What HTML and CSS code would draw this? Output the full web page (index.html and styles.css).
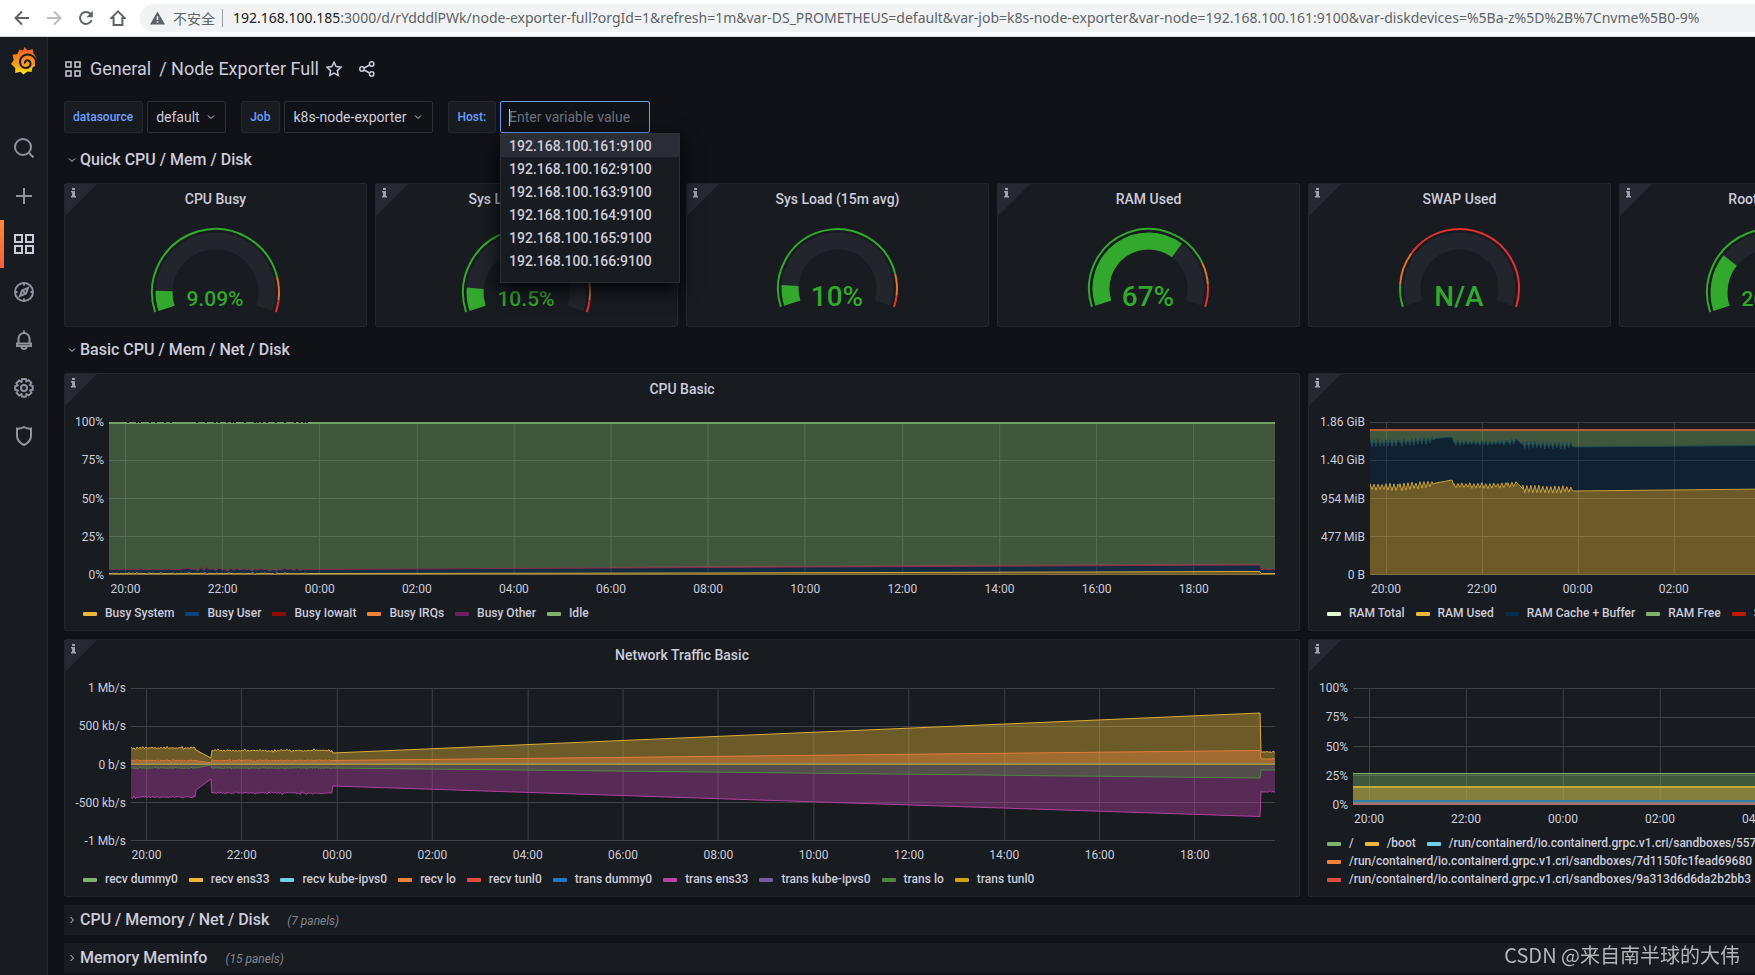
FILE: index.html
```html
<!DOCTYPE html>
<html lang="en">
<head>
    <meta charset="utf-8">
    <title>Node Exporter Full - Grafana</title>
    <link rel="stylesheet" href="styles.css">
</head>
<body>
    <header class="browser-bar">
        <button class="browser-btn" aria-label="Back"><svg viewBox="0 0 16 16"><path d="M15 8H2M8 1.5L1.5 8L8 14.5"/></svg></button>
        <button class="browser-btn" aria-label="Forward" disabled><svg viewBox="0 0 16 16"><path d="M1 8h13M8 1.5L14.500 8L8 14.500"/></svg></button>
        <button class="browser-btn" aria-label="Reload"><svg viewBox="0 0 16 16"><path d="M13.600 10.200A6 6 0 1 1 12.600 4"/><path class="solid" d="M14.800 0.800v6.400H8.400z"/></svg></button>
        <button class="browser-btn" aria-label="Home"><svg viewBox="0 0 16 16"><path d="M8 1.400L1.300 8H3.600V15H12.400V8H14.700z"/></svg></button>
        <div class="address" role="textbox" aria-label="Address">
            <svg class="warn" viewBox="0 0 16 14"><path fill-rule="evenodd" d="M8 0L16 14H0zM7.200 5v4h1.600V5zM7.200 10.500v1.600h1.600v-1.600z"/></svg>
            <span class="insecure">不安全</span>
            <span class="url"><b>192.168.100.185</b>:3000/d/rYdddlPWk/node-exporter-full?orgId=1&amp;refresh=1m&amp;var-DS_PROMETHEUS=default&amp;var-job=k8s-node-exporter&amp;var-node=192.168.100.161:9100&amp;var-diskdevices=%5Ba-z%5D%2B%7Cnvme%5B0-9%</span>
        </div>
    </header>

    <div class="app">
        <nav class="sidebar">
            <a href="#" class="logo" aria-label="Grafana">
                <svg viewBox="0 0 26 28">
                    <defs>
                        <linearGradient id="logoFill" x1="0" y1="1" x2="0" y2="0">
                            <stop offset="0" stop-color="#fcee1f"/>
                            <stop offset="0.3" stop-color="#faa61a"/>
                            <stop offset="1" stop-color="#f05a28"/>
                        </linearGradient>
                    </defs>
                    <path fill="url(#logoFill)" d="M13.500 0L16.500 3.200L21.800 2.300L22.300 6.500C24.500 8.500 25.500 11 25.500 13.500L23.800 14.500L24 19L21.500 20.500L20.500 25L16.500 24.500L12.500 27.500L9.500 24.800L4.300 26L4.200 21L0 17L2.800 13L1.500 7.800L6.300 7L8.500 2.600L12 3.600z"/>
                    <path class="swirl" d="M26 16.500C24.500 9.500 20 7.200 16 7.400C11.500 7.800 8.800 11.500 9 15.200C9.300 19 12 21.200 15 21C18 20.600 19.800 18.600 19.500 16.200C19.200 14 17.400 13 15.600 13.400C14.200 13.800 13.600 15.400 14.400 16.400"/>
                </svg>
            </a>
            <a href="#" class="nav-item" aria-label="Search"><svg viewBox="0 0 20 20"><circle cx="9" cy="9" r="8"/><path d="M14.800 14.800L19.500 19.500"/></svg></a>
            <a href="#" class="nav-item" aria-label="Create"><svg viewBox="0 0 20 20"><path d="M10 2v16M2 10h16"/></svg></a>
            <a href="#" class="nav-item active" aria-label="Dashboards"><svg viewBox="0 0 20 20"><path d="M1 1h7v7H1zM12 1h7v7h-7zM1 12h7v7H1zM12 12h7v7h-7z"/></svg></a>
            <a href="#" class="nav-item" aria-label="Explore"><svg viewBox="0 0 20 20"><circle cx="10" cy="10" r="9"/><path d="M10 1v2.500M10 16.500v2.500M1 10h2.500M16.500 10h2.500M14 6l-2 5.500L6 14l2-5.500zM9.200 9.200l1.600 1.600"/></svg></a>
            <a href="#" class="nav-item" aria-label="Alerting"><svg viewBox="0 0 20 20"><path d="M10 0.500v2.500M4.500 13.500V8.500a5.500 5.500 0 0 1 11 0v5M3 13.500h14v2.500H3zM7.500 16.500a2.500 2.500 0 0 0 5 0"/></svg></a>
            <a href="#" class="nav-item" aria-label="Configuration"><svg viewBox="0 0 20 20"><circle cx="10" cy="10" r="3"/><path d="M8.200 1h3.600l0.600 2.400l2.400-1.200l2.500 2.600l-1.200 2.300l2.600 1v3.700l-2.500 0.700l1.200 2.400l-2.600 2.500l-2.300-1.200l-0.800 2.600H8.200l-0.700-2.500l-2.400 1.200l-2.500-2.600l1.200-2.300L1.200 11.800V8.200l2.500-0.800l-1.200-2.300l2.600-2.600l2.400 1.200z"/></svg></a>
            <a href="#" class="nav-item" aria-label="Server Admin"><svg viewBox="0 0 20 20"><path d="M10 1c2.200 1.500 4.500 1.900 7 1.500V10c0 4-3 7-7 9c-4-2-7-5-7-9V2.500C5.500 2.900 7.800 2.500 10 1z"/></svg></a>
        </nav>

        <main class="page">
            <div class="title-bar">
                <svg class="title-grid" viewBox="0 0 16 16"><path d="M1 1h5v5H1zM10 1h5v5h-5zM1 10h5v5H1zM10 10h5v5h-5z"/></svg>
                <h1><a href="#">General</a><a href="#">/ Node Exporter Full</a></h1>
                <button class="icon-btn" aria-label="Mark as favorite"><svg viewBox="0 0 16 16"><path d="M8 1.200L10.100 5.500L14.900 6.200L11.400 9.600L12.200 14.400L8 12.100L3.800 14.400L4.600 9.600L1.100 6.200L5.900 5.500z"/></svg></button>
                <button class="icon-btn" aria-label="Share dashboard"><svg viewBox="0 0 16 16"><circle cx="12.700" cy="3" r="2.200"/><circle cx="3" cy="8" r="2.200"/><circle cx="12.700" cy="13" r="2.200"/><path d="M5 7l5.700-3M5 9l5.700 3"/></svg></button>
            </div>

            <div class="variables">
                <div class="variable">
                    <label for="datasource">datasource</label>
                    <div class="var-value">
                        <select id="datasource"><option>default</option></select>
                        <svg class="chevron" viewBox="0 0 8 8"><path d="M1 2.500l3 3l3-3"/></svg>
                    </div>
                </div>
                <div class="variable">
                    <label for="job">Job</label>
                    <div class="var-value">
                        <select id="job"><option>k8s-node-exporter</option></select>
                        <svg class="chevron" viewBox="0 0 8 8"><path d="M1 2.500l3 3l3-3"/></svg>
                    </div>
                </div>
                <div class="variable">
                    <label for="host">Host:</label>
                    <div class="host-picker">
                        <input type="text" id="host" placeholder="Enter variable value">
                        <ul class="host-menu" role="listbox">
                            <li class="selected" role="option">192.168.100.161:9100</li>
                            <li role="option">192.168.100.162:9100</li>
                            <li role="option">192.168.100.163:9100</li>
                            <li role="option">192.168.100.164:9100</li>
                            <li role="option">192.168.100.165:9100</li>
                            <li role="option">192.168.100.166:9100</li>
                        </ul>
                    </div>
                </div>
            </div>

            <div class="dashboard">
                <h2 class="row-title"><svg class="chevron" viewBox="0 0 8 8"><path d="M1 2.500l3 3l3-3"/></svg>Quick CPU / Mem / Disk</h2>

                <section class="panel gauge" data-value="9.09" data-text="9.09%" data-steps="85,95"><h3>CPU Busy</h3></section>
                <section class="panel gauge" data-value="10.5" data-text="10.5%" data-steps="85,95"><h3>Sys Load (5m avg)</h3></section>
                <section class="panel gauge" data-value="10" data-text="10%" data-steps="85,95"><h3>Sys Load (15m avg)</h3></section>
                <section class="panel gauge" data-value="67" data-text="67%" data-steps="80,90"><h3>RAM Used</h3></section>
                <section class="panel gauge" data-value="0" data-text="N/A" data-steps="10,25"><h3>SWAP Used</h3></section>
                <section class="panel gauge" data-value="26.1" data-text="26.1%" data-steps="80,90"><h3>Root FS Used</h3></section>

                <h2 class="row-title"><svg class="chevron" viewBox="0 0 8 8"><path d="M1 2.500l3 3l3-3"/></svg>Basic CPU / Mem / Net / Disk</h2>

                <section class="panel graph" data-chart="cpu">
                    <h3>CPU Basic</h3>
                    <div class="plot-row">
                        <div class="y-axis cpu-axis"><span>100%</span><span>75%</span><span>50%</span><span>25%</span><span>0%</span></div>
                        <div class="plot"></div>
                    </div>
                    <ul class="legend">
                        <li class="c-yellow">Busy System</li>
                        <li class="c-navy">Busy User</li>
                        <li class="c-darkred">Busy Iowait</li>
                        <li class="c-orange">Busy IRQs</li>
                        <li class="c-plum">Busy Other</li>
                        <li class="c-green">Idle</li>
                    </ul>
                </section>

                <section class="panel graph" data-chart="ram">
                    <h3>Memory Basic</h3>
                    <div class="plot-row">
                        <div class="y-axis ram-axis"><span>1.86 GiB</span><span>1.40 GiB</span><span>954 MiB</span><span>477 MiB</span><span>0 B</span></div>
                        <div class="plot"></div>
                    </div>
                    <ul class="legend">
                        <li class="c-mint">RAM Total</li>
                        <li class="c-yellow">RAM Used</li>
                        <li class="c-midnight">RAM Cache + Buffer</li>
                        <li class="c-green">RAM Free</li>
                        <li class="c-brick">SWAP Used</li>
                    </ul>
                </section>

                <section class="panel graph" data-chart="net">
                    <h3>Network Traffic Basic</h3>
                    <div class="plot-row">
                        <div class="y-axis net-axis"><span>1 Mb/s</span><span>500 kb/s</span><span>0 b/s</span><span>-500 kb/s</span><span>-1 Mb/s</span></div>
                        <div class="plot"></div>
                    </div>
                    <ul class="legend">
                        <li class="c-green">recv dummy0</li>
                        <li class="c-yellow">recv ens33</li>
                        <li class="c-cyan">recv kube-ipvs0</li>
                        <li class="c-orange">recv lo</li>
                        <li class="c-red">recv tunl0</li>
                        <li class="c-blue">trans dummy0</li>
                        <li class="c-magenta">trans ens33</li>
                        <li class="c-violet">trans kube-ipvs0</li>
                        <li class="c-forest">trans lo</li>
                        <li class="c-gold">trans tunl0</li>
                    </ul>
                </section>

                <section class="panel graph" data-chart="disk">
                    <h3>Disk Space Used Basic</h3>
                    <div class="plot-row">
                        <div class="y-axis disk-axis"><span>100%</span><span>75%</span><span>50%</span><span>25%</span><span>0%</span></div>
                        <div class="plot"></div>
                    </div>
                    <ul class="legend">
                        <li class="c-green">/</li>
                        <li class="c-yellow">/boot</li>
                        <li class="c-cyan">/run/containerd/io.containerd.grpc.v1.cri/sandboxes/557d</li>
                    </ul>
                    <ul class="legend"><li class="c-orange">/run/containerd/io.containerd.grpc.v1.cri/sandboxes/7d1150fc1fead69680</li></ul>
                    <ul class="legend"><li class="c-red">/run/containerd/io.containerd.grpc.v1.cri/sandboxes/9a313d6d6da2b2bb3</li></ul>
                </section>

                <h2 class="row-title collapsed"><svg class="chevron" viewBox="0 0 8 8"><path d="M2.500 1l3 3l-3 3"/></svg>CPU / Memory / Net / Disk <small>(7 panels)</small></h2>
                <h2 class="row-title collapsed"><svg class="chevron" viewBox="0 0 8 8"><path d="M2.500 1l3 3l-3 3"/></svg>Memory Meminfo <small>(15 panels)</small></h2>
            </div>
        </main>
    </div>

    <div class="watermark">CSDN @来自南半球的大伟</div>

    <script src="script.js"></script>
</body>
</html>
```
FILE: styles.css
```css
* { box-sizing: border-box; }
body { margin: 0; height: 100vh; overflow: hidden; display: flex; flex-direction: column; background: #111217; color: #ccccdc; font-family: Roboto, "Liberation Sans", sans-serif; font-size: 14px; }
h1, h2, h3, ul { margin: 0; padding: 0; font-weight: 500; }
ul { list-style: none; }
a { color: inherit; text-decoration: none; }
button { background: none; border: none; padding: 0; cursor: pointer; }
svg { display: block; flex: none; fill: none; stroke: currentColor; }

/* browser toolbar */
.browser-bar { flex: none; display: flex; align-items: center; height: 37px; padding-left: 14px; background: #fff; border-bottom: 1px solid #d5d7da; color: #5f6368; }
.browser-btn { width: 16px; margin-right: 16px; color: #5f6368; }
.browser-btn:disabled { color: #babcbe; }
.browser-btn svg { width: 16px; height: 16px; stroke-width: 2; }
.browser-btn .solid { fill: currentColor; stroke: none; }
.address { flex: 1; min-width: 0; display: flex; align-items: center; height: 28px; margin-left: -2px; padding-left: 10px; background: #f1f3f4; border-radius: 14px 0 0 14px; white-space: nowrap; overflow: hidden; }
.warn { width: 15px; height: 14px; margin-right: 8px; fill: #5f6368; stroke: none; }
.insecure { padding-right: 7px; border-right: 1px solid #9aa0a6; font: 14px/18px "Noto Sans CJK SC", sans-serif; }
.url { padding-left: 10px; font: 14px/20px "Noto Sans", "Open Sans", sans-serif; }
.url b { font-weight: 400; color: #202124; }

/* left menu */
.app { flex: 1; min-height: 0; display: flex; }
.sidebar { flex: none; width: 48px; background: #181b1f; border-right: 1px solid #22252b; color: #9093a0; }
.logo { display: block; height: 74px; padding: 10px 0 0 11px; }
.logo svg { width: 26px; height: 28px; stroke: none; }
.logo .swirl { stroke: #181b1f; stroke-width: 2; }
.nav-item { display: flex; align-items: center; justify-content: center; height: 48px; border-left: 4px solid transparent; padding-right: 3px; }
.logo + .nav-item { margin-top: 13px; }
.nav-item svg { width: 20px; height: 20px; stroke-width: 2; }
.nav-item.active { color: #ccccdc; border-image: linear-gradient(#ff8833, #f55f3e) 1; border-width: 0 0 0 4px; border-style: solid; }

/* dashboard header */
.page { flex: 1; min-width: 0; padding: 0 16px; overflow: hidden; }
.title-bar { display: flex; align-items: center; height: 64px; }
.title-grid { width: 16px; height: 16px; margin: 0 9px 0 1px; stroke-width: 1.5; }
h1 { display: flex; gap: 8px; font-size: 18px; font-weight: 400; line-height: 24px; }
.icon-btn { color: #ccccdc; margin-left: 7px; }
.icon-btn + .icon-btn { margin-left: 17px; }
.icon-btn svg { width: 16px; height: 16px; stroke-width: 1.5; }
.variables { display: flex; gap: 15px; margin-bottom: 12px; }
.variable { display: flex; gap: 4px; }
.variable label { height: 32px; padding: 0 9px 0 8px; border: 1px solid #22252b; border-radius: 2px; background: #181b1f; color: #6e9fff; font-size: 12px; font-weight: 500; line-height: 30px; }
.var-value { display: flex; align-items: center; gap: 7px; height: 32px; padding: 0 10px 0 8px; border: 1px solid #2c2f36; border-radius: 2px; background: #111217; }
.var-value select { appearance: none; border: none; padding: 0; background: transparent; color: #ccccdc; font: 14px/20px Roboto, sans-serif; }
.chevron { width: 8px; height: 8px; }
.host-picker { position: relative; }
.host-picker::before { content: ""; position: absolute; left: 9px; top: 8px; width: 1px; height: 17px; background: #ccccdc; }
.host-picker input { display: block; width: 150px; height: 32px; padding: 0 8px; border: 1px solid #6e9fff; border-radius: 2px; background: #111217; color: #ccccdc; font: 14px/20px Roboto, sans-serif; }
.host-picker input::placeholder { color: #6f717c; }
.host-menu { position: absolute; z-index: 2; top: 32px; left: 0; width: 180px; height: 150px; border: 1px solid #2c2f36; background: #181b1f; box-shadow: 0 6px 18px #010409; }
.host-menu li { padding: 2px 8px 0; line-height: 21px; }
.host-menu .selected { background: #2b2d34; }

/* panels, eight columns that run past narrow windows */
.dashboard { display: grid; grid-template-columns: repeat(8, 1fr); gap: 8px; min-width: 2480px; }
.row-title { grid-column: 1 / -1; display: flex; align-items: center; height: 30px; padding-left: 4px; font-size: 16px; line-height: 30px; }
.row-title .chevron { margin-right: 4px; }
.row-title.collapsed { background: #181b1f; }
.row-title small { margin-left: 18px; color: #83858f; font-size: 12px; font-style: italic; font-weight: 400; padding-top: 2px; }
.panel { position: relative; display: flex; flex-direction: column; background: #181b1f; border: 1px solid #22252b; border-radius: 2px; }
.panel h3 { font-size: 14px; line-height: 30px; text-align: center; }
.info { position: absolute; left: 0; top: 0; width: 32px; height: 32px; stroke: none; }
.gauge { height: 144px; align-items: center; }
.gauge .dial { width: 141px; height: 96px; margin-top: 8px; }
.dial text { stroke: none; text-anchor: middle; font-family: Roboto, sans-serif; font-weight: 500; }
.graph { grid-column: span 4; height: 258px; padding-bottom: 8px; }
.plot-row { flex: 1; min-height: 0; display: flex; margin: 18px 24px 29px 0; }
.y-axis { flex: none; display: flex; flex-direction: column; justify-content: space-between; margin: -8px 0; padding-right: 5px; text-align: right; font-size: 12px; line-height: 16px; }
.cpu-axis { width: 44px; }
.ram-axis { width: 61px; }
.net-axis { width: 66px; }
.disk-axis { width: 44px; }
.plot { flex: 1; min-width: 0; }
.plot svg { width: 100%; height: 100%; }
.plot path, .plot line { vector-effect: non-scaling-stroke; }
.x-axis { display: flex; width: 100%; margin-top: 6px; font-size: 12px; line-height: 16px; }
.x-axis span { flex: none; text-align: center; }
.legend { display: flex; gap: 11px; padding-left: 18px; font-size: 12px; line-height: 18px; white-space: nowrap; overflow: hidden; }
.legend li { display: flex; align-items: center; gap: 8px; }
.legend li::before { content: ""; width: 14px; height: 4px; margin-top: 2px; border-radius: 1px; background: var(--c); }
.c-yellow { --c: #eab839; }
.c-navy { --c: #0a437c; }
.c-darkred { --c: #890f02; }
.c-orange { --c: #ef843c; }
.c-plum { --c: #6d1f62; }
.c-green { --c: #7eb26d; }
.c-mint { --c: #e0f9d7; }
.c-midnight { --c: #052b51; }
.c-brick { --c: #bf1b00; }
.c-cyan { --c: #6ed0e0; }
.c-red { --c: #e24d42; }
.c-blue { --c: #1f78c1; }
.c-magenta { --c: #ba43a9; }
.c-violet { --c: #705da0; }
.c-forest { --c: #508642; }
.c-gold { --c: #cca300; }

.watermark { position: fixed; right: 15px; bottom: 6px; color: #b4b5b8; font: 20px/28px "Noto Sans CJK SC", sans-serif; }
```
FILE: script.js
```js
const GREEN = '#32a82d'
const ORANGE = '#e0752d'
const RED = '#e8302f'
const hours = ['20:00', '22:00', '00:00', '02:00', '04:00', '06:00', '08:00', '10:00', '12:00', '14:00', '16:00', '18:00']

// gauges: 216 degree dial, value arc inside a thin threshold ring
function arc(cx, cy, r, from, to, color, width) {
    const pt = (v) => {
        const a = (162 + v * 2.16) * Math.PI / 180
        return (cx + r * Math.cos(a)).toFixed(2) + ' ' + (cy + r * Math.sin(a)).toFixed(2)
    }
    const large = (to - from) * 2.16 > 180 ? 1 : 0
    return `<path d="M${pt(from)}A${r} ${r} 0 ${large} 1 ${pt(to)}" stroke="${color}" stroke-width="${width}"/>`
}

document.querySelectorAll('.gauge').forEach((panel) => {
    const { value, text, steps } = panel.dataset
    const [warn, crit] = steps.split(',').map(Number)
    const small = text.length < 4
    const r = small ? 60.5 : 64.5
    const cy = small ? 66.5 : 70.5
    panel.insertAdjacentHTML('beforeend', `<svg class="dial" viewBox="0 0 141 96">
        ${arc(70.5, cy, r - 13, 0, 100, '#22252b', 17)}
        ${value > 0 ? arc(70.5, cy, r - 13, 0, Number(value), GREEN, 17) : ''}
        ${arc(70.5, cy, r - 1, 0, warn, GREEN, 2)}
        ${arc(70.5, cy, r - 1, warn, crit, ORANGE, 2)}
        ${arc(70.5, cy, r - 1, crit, 100, RED, 2)}
        <text x="70" y="84" fill="${GREEN}" font-size="${small ? 28 : 21}">${text}</text>
    </svg>`)
})

document.querySelectorAll('.panel').forEach((panel) => {
    panel.insertAdjacentHTML('afterbegin', `<svg class="info" viewBox="0 0 32 32">
        <path fill="#262a30" d="M0 0h32L0 32z"/>
        <path fill="#9fa1ab" d="M7 4h3v2H7zM6 7h4v5h1v1.500H6V12h1V8.500H6z"/>
    </svg>`)
})

// graphs
let seed = 7
function rand() {
    seed = (seed * 16807) % 2147483647
    return seed / 2147483647
}

// [x, y] corner points, or [x, y, amplitude, period] for a noisy stretch up to that x
function build(points) {
    const out = []
    points.forEach(([x, y, amp, period], i) => {
        if (amp && i > 0) {
            const [px, py] = points[i - 1]
            let up = false
            for (let t = px; t < x; t += period / 2) {
                up = !up
                const size = amp > 2 ? 0.6 + rand() * 0.4 : rand() * rand() * 2
                out.push([t, py + (y - py) * (t - px) / (x - px) + (up ? -amp : amp) * size])
            }
        }
        out.push([x, y])
    })
    return out
}

function toPath(points) {
    return points.map(([x, y]) => x.toFixed(1) + ' ' + y.toFixed(1)).join('L')
}

function area(points, base, fill, stroke, width = 1) {
    const pts = build(points)
    const last = pts[pts.length - 1][0]
    const floor = typeof base === 'number' ? `L${last} ${base}L0 ${base}z` : 'L' + toPath(base.slice().reverse()) + 'z'
    return `<path d="M${toPath(pts)}${floor}" fill="${fill}" fill-opacity="0.4" stroke="none"/>` +
        (stroke ? `<path d="M${toPath(pts)}" stroke="${stroke}" stroke-width="${width}"/>` : '')
}

function hline(y, w, color, width = 1) {
    return `<line x1="0" x2="${w}" y1="${y}" y2="${y}" stroke="${color}" stroke-width="${width}"/>`
}

const charts = {
    cpu: {
        w: 1167, h: 153, first: 16.5, step: 97.2,
        draw() {
            const sys = build([[0, 151.5], [200, 151.5, 0.5, 4], [600, 151], [1152, 149.5], [1153, 151.5], [1167, 151.5]])
            const busy = build([[0, 147.5], [70, 147.5, 0.3, 4], [78, 146.3], [86, 147.5], [200, 147.5, 1, 6], [600, 145.5], [1152, 143], [1153, 147.5], [1167, 147.5, 0.6, 4]])
            let gaps = ''
            for (let x = 18; x < 203; x += 3 + rand() * 7) {
                if (x > 66 && x < 84) continue
                gaps += `<path d="M${x.toFixed(0)} 0.5h2" stroke="#181b1f"/>`
            }
            return area([[0, 0], [1167, 0]], busy, '#7eb26d') +
                hline(1, this.w, '#72a163', 2) + gaps +
                area(busy, sys, '#0a437c', '#8d2a48', 1) +
                `<path d="M500 145.200L1152 142" stroke="#9a4a4c" opacity="0.700"/>` +
                area(sys, 153, '#eab839', '#d0a636', 1)
        }
    },
    ram: {
        w: 1150, h: 153, first: 16, step: 96,
        draw() {
            const used = build([[0, 65], [30, 65, 4, 4], [63, 62, 4, 4], [66, 61], [82, 58], [84, 63.5], [138, 63.5, 3, 4], [148, 61.5, 3, 4], [153, 67], [202, 67.5, 4, 4], [203, 69], [400, 67], [1150, 62]])
            const cache = build([[0, 21], [30, 21, 4, 4], [63, 18, 4, 4], [66, 16.5], [82, 15], [84, 21], [138, 21, 3, 4], [148, 18.5, 3, 4], [153, 23], [202, 23.5, 4, 4], [203, 25], [400, 23.5], [1150, 18]])
            return area([[0, 8], [1150, 8]], cache, '#7eb26d') +
                area(cache, used, '#052b51', '#1b4a55') +
                area(used, 153, '#eab839', '#c9a038') +
                hline(8, this.w, '#b55a33', 2)
        }
    },
    net: {
        w: 1145, h: 153, first: 15.5, step: 95.4,
        draw() {
            const ens = [[0, 60], [64, 60, 1, 3], [65, 62], [80, 70], [81, 62.5], [201, 62.5, 1, 3], [202, 65], [1130, 25], [1131, 64], [1145, 64, 0.5, 3]]
            const lo = [[0, 72.5], [64, 72.5, 0.6, 3], [80, 75], [81, 72.5], [201, 72.5, 0.6, 3], [1130, 62.5], [1131, 71], [1145, 71, 0.6, 3]]
            const transEns = [[0, 109], [64, 109, 1, 3], [65, 102], [80, 91], [81, 105], [201, 105, 1, 3], [202, 98], [1130, 128.5], [1131, 104], [1145, 104, 0.7, 3]]
            const transLo = [[0, 80], [64, 80, 0.6, 3], [80, 77], [81, 80], [201, 80, 0.6, 3], [1130, 90], [1131, 82], [1145, 82]]
            return area(ens, 76.5, '#eab839', '#dcae38') +
                area(lo, 76.5, '#ef843c', '#e27d3b') +
                area(transEns, 76.5, '#ba43a9', '#b041a0') +
                area(transLo, 76.5, '#508642', '#508642') +
                hline(75.5, this.w, '#93886e') + hline(76.5, this.w, '#a8902c')
        }
    },
    disk: {
        w: 1167, h: 117, first: 16, step: 97.1,
        draw() {
            return area([[0, 85.5], [1167, 85.5]], 117, '#7eb26d', '#7eb26d') +
                area([[0, 99], [1167, 99]], 117, '#eab839', '#c4a836', 2) +
                hline(115, this.w, '#8a7f80', 2) +
                hline(113, this.w, '#2f7fa5', 2) +
                hline(116.5, this.w, '#b8655c')
        }
    }
}

document.querySelectorAll('.graph').forEach((panel) => {
    const chart = charts[panel.dataset.chart]
    const { w, h, first, step } = chart
    let grid = ''
    for (let i = 0; i <= 4; i++) grid += hline(Math.floor((h - 1) * i / 4) + 0.5, w, '#3f4144')
    hours.forEach((hour, i) => {
        const x = Math.floor(first + step * i) + 0.5
        grid += `<line x1="${x}" x2="${x}" y1="0" y2="${h}" stroke="#3f4144"/>`
    })
    const plot = panel.querySelector('.plot')
    plot.innerHTML = `<svg viewBox="0 0 ${w} ${h}" preserveAspectRatio="none">${grid}${chart.draw()}</svg>`

    const offset = (first - step / 2) / w * 100
    const cell = step / w * 100
    plot.insertAdjacentHTML('beforeend', `<div class="x-axis">${hours.map((hour, i) =>
        `<span style="width: ${cell}%${i === 0 ? `; margin-left: ${offset}%` : ''}">${hour}</span>`).join('')}</div>`)
})
```
